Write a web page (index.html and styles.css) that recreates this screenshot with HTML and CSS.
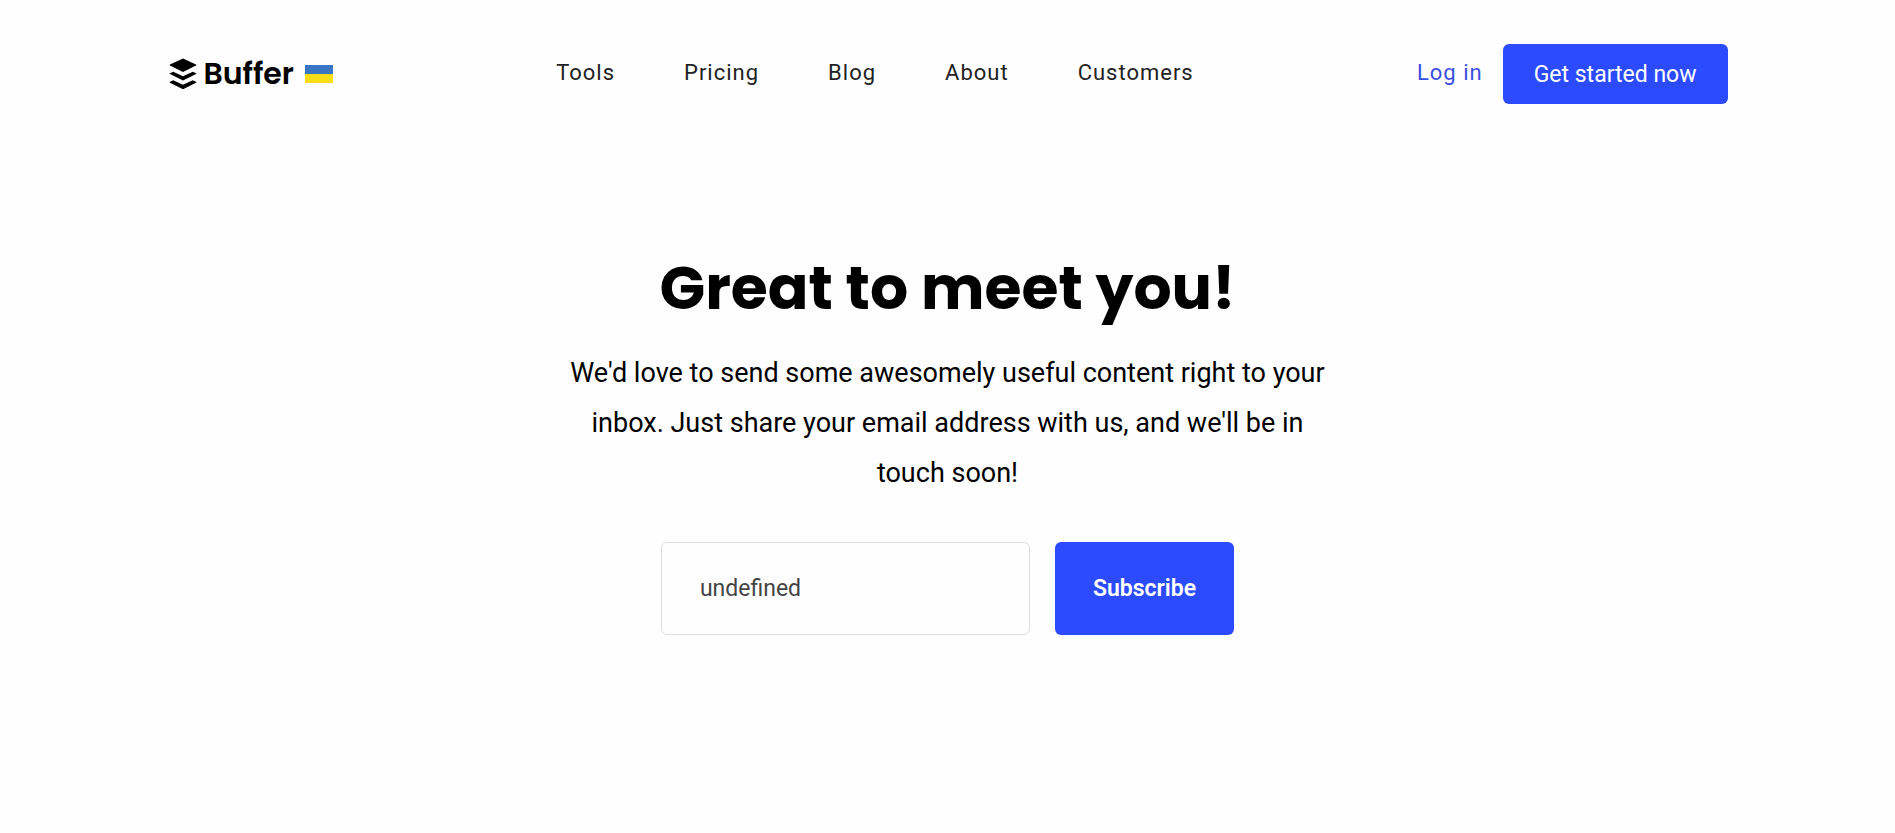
FILE: index.html
```
<!DOCTYPE html>
<html lang="en">
  <head>
    <meta charset="utf-8" />
    <title>Buffer</title>
    <meta name="viewport" content="width=device-width, initial-scale=1.0" />
    <link rel="stylesheet" href="styles.css">
  </head>
  <body>
    <header class="header">
      <a class="logo" href="#">
        <svg class="logo-icon" viewBox="0 0 28 32" aria-hidden="true">
          <path d="M14 .5L27 6.600c.6.3.6.6 0 .9L14 14 1 7.500c-.6-.3-.6-.6 0-.9z" />
          <path d="M1 15.200l3.200-1.500 9.800 4.500 9.800-4.500L27 15.200c.6.3.6.6 0 .9L14 22.500 1 16.100c-.6-.3-.6-.6 0-.9z" />
          <path d="M1 23.800l3.200-1.500 9.800 4.500 9.800-4.500L27 23.800c.6.3.6.6 0 .9L14 31.200 1 24.700c-.6-.3-.6-.6 0-.9z" />
        </svg>
        <span class="logo-text">Buffer</span>
        <svg class="flag" viewBox="0 0 28 18" role="img" aria-label="Flag of Ukraine">
          <rect width="28" height="9" fill="#3a75c4" />
          <rect y="9" width="28" height="9" fill="#f9dd16" />
        </svg>
      </a>

      <nav class="nav">
        <a href="#">Tools</a>
        <a href="#">Pricing</a>
        <a href="#">Blog</a>
        <a href="#">About</a>
        <a href="#">Customers</a>
      </nav>

      <div class="actions">
        <a class="login" href="#">Log in</a>
        <button class="get-started" type="button">Get started now</button>
      </div>
    </header>

    <main class="hero">
      <h1>Great to meet you!</h1>
      <p>
        We'd love to send some awesomely useful content right to your inbox.
        Just share your email address with us, and we'll be in touch soon!
      </p>
      <form class="subscribe-form">
        <input type="email" placeholder="undefined" aria-label="Email address" />
        <button type="submit">Subscribe</button>
      </form>
    </main>
  </body>
</html>
```

FILE: styles.css
```
* {
  box-sizing: border-box;
}
body {
  margin: 0;
  background: #fefefe;
  color: #000;
  font-family: Roboto, sans-serif;
}
a {
  color: inherit;
  text-decoration: none;
}
button,
input {
  font-family: inherit;
  font-size: 23px;
  border-radius: 6px;
}
button {
  background: #2c4bff;
  color: white;
  border: none;
  cursor: pointer;
}
button:hover {
  background: #1f3ae0;
}
.header {
  display: flex;
  align-items: center;
  justify-content: space-between;
  max-width: 1560px;
  margin: 0 auto;
  padding-top: 44px;
}
.logo {
  display: flex;
  align-items: center;
}
.logo-icon {
  width: 28px;
  height: 32px;
  margin: 0 7px 0 1px;
}
.logo-text {
  font-family: Poppins, sans-serif;
  font-size: 30px;
  font-weight: 600;
  line-height: 42px;
}
.flag {
  width: 28px;
  height: 18px;
  margin-left: 11px;
}
.nav {
  display: flex;
  gap: 69px;
  color: #222;
}
.nav,
.login {
  padding-bottom: 3px;
  font-size: 22px;
  letter-spacing: 1px;
}
.actions {
  display: flex;
  align-items: center;
  gap: 20px;
}
.login {
  color: #3a4fe0;
}
.get-started {
  height: 60px;
  padding: 0 31px;
}
.hero {
  display: flex;
  flex-direction: column;
  align-items: center;
  padding: 139px 20px;
  text-align: center;
}
h1 {
  margin: 0;
  font-family: Poppins, sans-serif;
  font-size: 60px;
  font-weight: 700;
  line-height: 90px;
}
.hero p {
  max-width: 780px;
  margin: 15px 0 44px;
  font-size: 27px;
  line-height: 50px;
}
.subscribe-form {
  display: flex;
  gap: 25px;
}
.subscribe-form input {
  width: 369px;
  height: 93px;
  padding: 0 38px;
  border: 1px solid #ddd;
  background: #fefefe;
}
.subscribe-form input::placeholder {
  color: #444;
}
.subscribe-form button {
  padding: 0 38px;
  font-weight: 600;
}
```
